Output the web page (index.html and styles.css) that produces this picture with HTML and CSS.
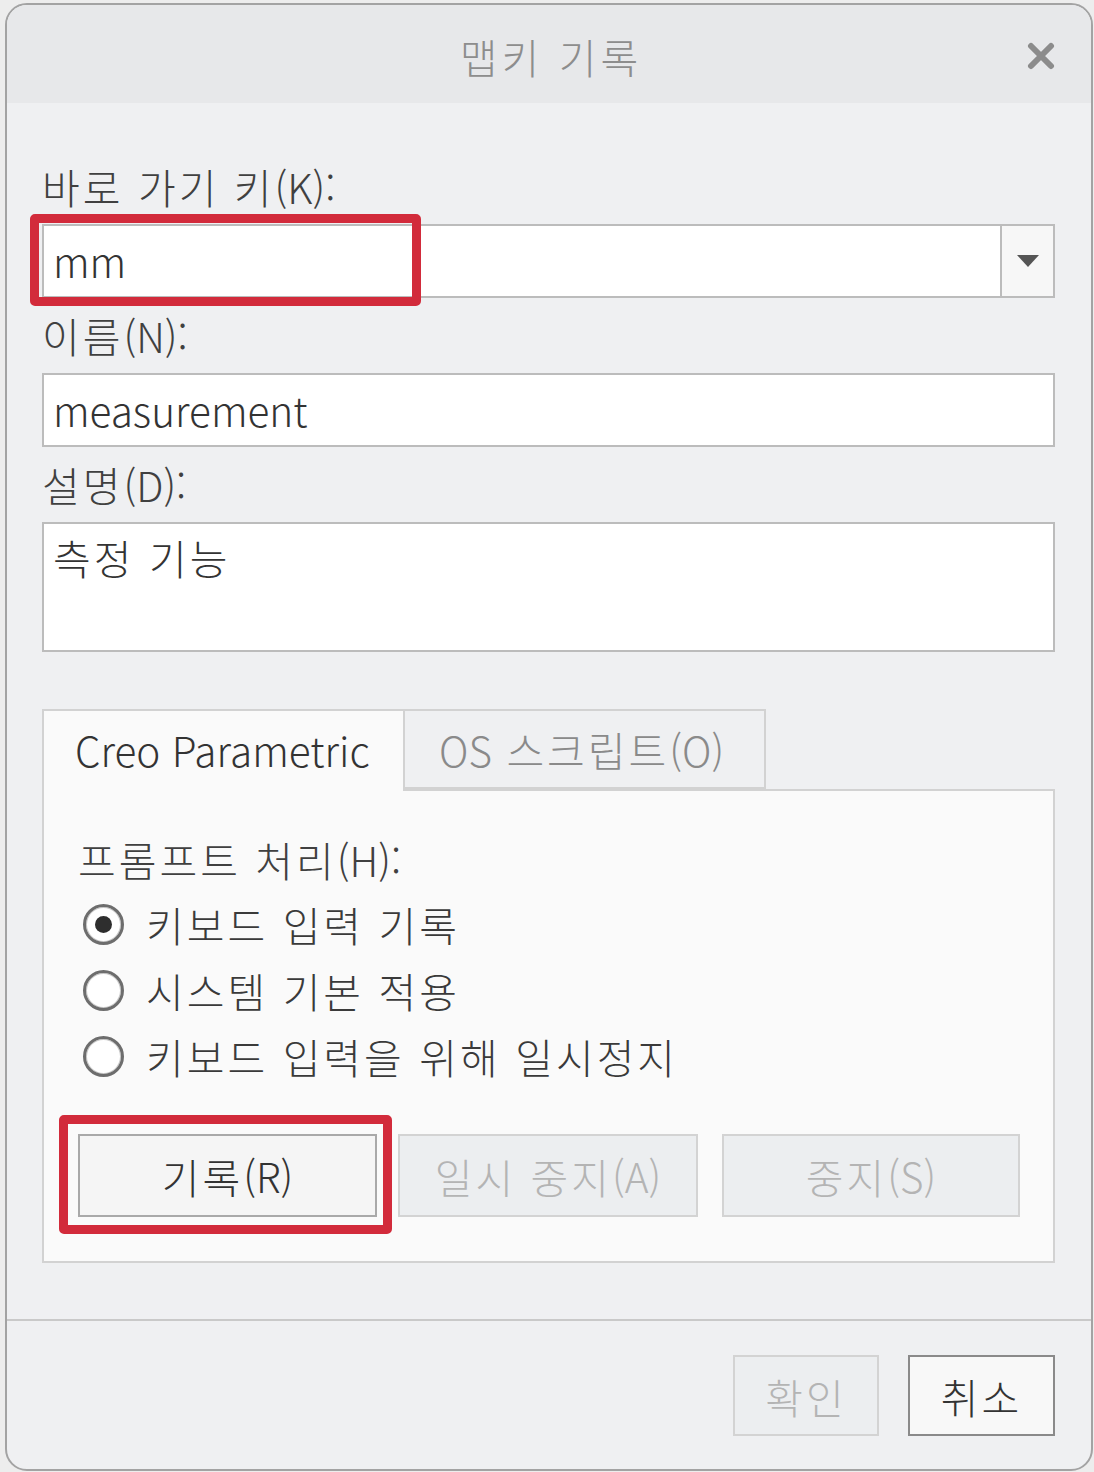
FILE: index.html
```html
<!DOCTYPE html>
<html lang="ko">
<head>
<meta charset="utf-8">
<title>맵키 기록</title>
<link rel="stylesheet" href="styles.css">
</head>
<body>
<div class="dialog">
  <div class="titlebar">
    <span></span>
    <span class="title">맵키 기록</span>
    <span class="close">
      <svg width="28" height="28" viewBox="0 0 28 28"><path d="M4 4 L24 24 M24 4 L4 24" stroke="#8c8c8c" stroke-width="6" stroke-linecap="round"/></svg>
    </span>
  </div>
  <div class="content">
    <div class="label">바로 가기 키<span class="lat">(K):</span></div>
    <div class="field combo">
      <span class="value lat">mm</span>
      <span class="drop"><svg width="24" height="14" viewBox="0 0 24 14"><path d="M1 1 L23 1 L12 13 Z" fill="#555"/></svg></span>
      <span class="mark mark-key"></span>
    </div>
    <div class="label">이름<span class="lat">(N):</span></div>
    <div class="field"><span class="value lat">measurement</span></div>
    <div class="label">설명<span class="lat">(D):</span></div>
    <div class="field area"><span class="value">측정 기능</span></div>

    <div class="tabs">
      <div class="tab active"><span class="lat">Creo Parametric</span></div>
      <div class="tab"><span class="lat">OS</span> 스크립트<span class="lat">(O)</span></div>
    </div>
    <div class="panel">
      <div class="plabel">프롬프트 처리<span class="lat">(H):</span></div>
      <div class="radio-row"><span class="radio checked"></span><span>키보드 입력 기록</span></div>
      <div class="radio-row"><span class="radio"></span><span>시스템 기본 적용</span></div>
      <div class="radio-row"><span class="radio"></span><span>키보드 입력을 위해 일시정지</span></div>
      <div class="btn-row">
        <div class="btn b1">기록<span class="lat">(R)</span><span class="mark mark-rec"></span></div>
        <div class="btn disabled b2">일시 중지<span class="lat">(A)</span></div>
        <div class="btn disabled b3">중지<span class="lat">(S)</span></div>
      </div>
    </div>
  </div>
  <div class="footer">
    <div class="btn disabled ok">확인</div>
    <div class="btn cancel">취소</div>
  </div>
</div>
</body>
</html>
```

FILE: styles.css
```css
* { box-sizing: border-box; }
html, body { margin: 0; padding: 0; }
body {
  background: #ededed;
  font-family: "Noto Sans CJK KR", "Noto Sans", sans-serif;
  font-size: 41px;
  font-weight: 300;
  letter-spacing: 3px;
  color: #3c3c3c;
  overflow: hidden;
}
.lat {
  letter-spacing: 0;
  font-size: 40.5px;
}
.dialog {
  margin: 3px 0 0 5px;
  width: 1088px;
  height: 1468px;
  border: 2px solid #a3a3a3;
  border-radius: 22px;
  background: #eff0f2;
  overflow: hidden;
  display: flex;
  flex-direction: column;
}
.titlebar {
  height: 98px;
  background: #e7e8ea;
  display: grid;
  grid-template-columns: 1fr auto 1fr;
  align-items: center;
  padding: 4px 36px 0 36px;
}
.title {
  color: #8d8d8d;
  line-height: 60px;
  letter-spacing: 4px;
  margin-left: 4px;
}
.close {
  justify-self: end;
  display: flex;
}
.content {
  padding: 46px 36px 56px 35px;
}
.label {
  height: 75px;
  padding-top: 2px;
  line-height: 70px;
  color: #404040;
}
.field {
  position: relative;
  height: 74px;
  background: #fff;
  border: 2px solid #bcbcbc;
  display: flex;
  align-items: center;
  padding-left: 9px;
}
.value {
  line-height: 48px;
  color: #333;
}
.combo .value { flex: 1; }
.drop {
  width: 53px;
  align-self: stretch;
  background: #f7f7f7;
  border-left: 2px solid #bcbcbc;
  display: flex;
  align-items: center;
  justify-content: center;
}
.area {
  height: 130px;
  align-items: flex-start;
  padding-top: 9px;
}
.mark {
  position: absolute;
  border: 9px solid #d22b3b;
  border-radius: 5px;
}
.mark-key {
  left: -14px;
  top: -12px;
  width: 391px;
  height: 92px;
}
.tabs {
  margin-top: 57px;
  display: flex;
  height: 80px;
  position: relative;
  z-index: 1;
}
.tab {
  line-height: 76px;
  border: 2px solid #d2d2d2;
  border-bottom: none;
}
.tab.active {
  width: 363px;
  height: 82px;
  background: #fafafa;
  padding-left: 31px;
  color: #333;
}
.tab:not(.active) {
  width: 361px;
  border-left: none;
  background: #eff0f2;
  padding-left: 34px;
  color: #8a8a8a;
  border-bottom: 2px solid #d2d2d2;
}
.panel {
  height: 474px;
  background: #fafafa;
  border: 2px solid #d2d2d2;
  padding: 37px 0 0 34px;
}
.plabel {
  height: 63px;
  line-height: 63px;
  color: #404040;
}
.radio-row {
  height: 66px;
  display: flex;
  align-items: center;
  gap: 22px;
  padding-left: 5px;
  line-height: 66px;
  color: #3a3a3a;
}
.radio {
  width: 41px;
  height: 41px;
  border-radius: 50%;
  border: 3px solid #6d6d6d;
  background: #fff;
  box-shadow: inset 0 0 0 1px #c8c8c8;
  position: relative;
  flex: none;
}
.radio.checked::after {
  content: "";
  position: absolute;
  left: 9px;
  top: 9px;
  width: 17px;
  height: 17px;
  border-radius: 50%;
  background: #2e2e2e;
}
.btn-row {
  display: flex;
  margin-top: 45px;
}
.btn {
  position: relative;
  height: 83px;
  border: 2px solid #a9a9a9;
  background: #f5f5f5;
  display: flex;
  align-items: center;
  justify-content: center;
  color: #333;
  line-height: 60px;
}
.btn.disabled {
  border-color: #d3d3d3;
  background: #eceef0;
  color: #b4b4b4;
}
.b1 { width: 299px; }
.b2 { width: 300px; margin-left: 21px; }
.b3 { width: 298px; margin-left: 24px; }
.mark-rec {
  left: -21px;
  top: -21px;
  width: 333px;
  height: 119px;
}
.footer {
  border-top: 2px solid #c9c9c9;
  display: flex;
  justify-content: flex-end;
  gap: 29px;
  padding: 34px 36px 0 0;
}
.ok {
  width: 146px;
  height: 81px;
  background: #eaebed;
}
.cancel {
  width: 147px;
  height: 81px;
  background: #f8f8f8;
  border-color: #8a8a8a;
}
```
